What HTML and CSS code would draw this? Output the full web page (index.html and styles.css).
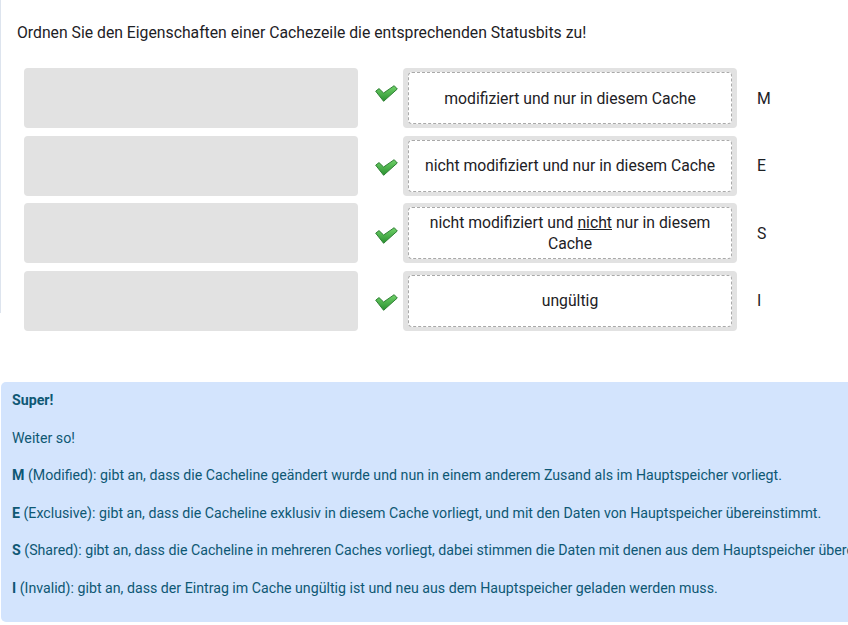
FILE: index.html
```html
<!DOCTYPE html>
<html lang="de">
<head>
<meta charset="utf-8">
<link rel="stylesheet" href="styles.css">
</head>
<body>
<div class="question">
  <p class="qtext">Ordnen Sie den Eigenschaften einer Cachezeile die entsprechenden Statusbits zu!</p>
  <div class="rows">
    <div class="row">
      <div class="drop"></div>
      <div class="mark"><svg width="23" height="17" viewBox="0 0 23 17"><defs><linearGradient id="g1" x1="0" y1="0" x2="0" y2="1"><stop offset="0" stop-color="#72d36a"/><stop offset="1" stop-color="#28902f"/></linearGradient></defs><path d="M0.7 6.2 L4 3.6 L8.6 8 L19.2 0.7 L22.3 4 L8.6 16.3 Z" fill="url(#g1)" stroke="#2f7f34" stroke-width="1" stroke-linejoin="round"/></svg></div>
      <div class="slot"><div class="choice"><span>modifiziert und nur in diesem Cache</span></div></div>
      <div class="label">M</div>
    </div>
    <div class="row">
      <div class="drop"></div>
      <div class="mark"><svg width="23" height="17" viewBox="0 0 23 17"><path d="M0.7 6.2 L4 3.6 L8.6 8 L19.2 0.7 L22.3 4 L8.6 16.3 Z" fill="url(#g1)" stroke="#2f7f34" stroke-width="1" stroke-linejoin="round"/></svg></div>
      <div class="slot"><div class="choice"><span>nicht modifiziert und nur in diesem Cache</span></div></div>
      <div class="label">E</div>
    </div>
    <div class="row">
      <div class="drop"></div>
      <div class="mark"><svg width="23" height="17" viewBox="0 0 23 17"><path d="M0.7 6.2 L4 3.6 L8.6 8 L19.2 0.7 L22.3 4 L8.6 16.3 Z" fill="url(#g1)" stroke="#2f7f34" stroke-width="1" stroke-linejoin="round"/></svg></div>
      <div class="slot"><div class="choice"><span>nicht modifiziert und <u>nicht</u> nur in diesem Cache</span></div></div>
      <div class="label">S</div>
    </div>
    <div class="row">
      <div class="drop"></div>
      <div class="mark"><svg width="23" height="17" viewBox="0 0 23 17"><path d="M0.7 6.2 L4 3.6 L8.6 8 L19.2 0.7 L22.3 4 L8.6 16.3 Z" fill="url(#g1)" stroke="#2f7f34" stroke-width="1" stroke-linejoin="round"/></svg></div>
      <div class="slot"><div class="choice"><span>ungültig</span></div></div>
      <div class="label">I</div>
    </div>
  </div>
</div>
<div class="feedback">
  <p><strong>Super!</strong></p>
  <p>Weiter so!</p>
  <p><strong>M</strong> (Modified): gibt an, dass die Cacheline geändert wurde und nun in einem anderem Zusand als im Hauptspeicher vorliegt.</p>
  <p><strong>E</strong> (Exclusive): gibt an, dass die Cacheline exklusiv in diesem Cache vorliegt, und mit den Daten von Hauptspeicher übereinstimmt.</p>
  <p><strong>S</strong> (Shared): gibt an, dass die Cacheline in mehreren Caches vorliegt, dabei stimmen die Daten mit denen aus dem Hauptspeicher übereinstimmen.</p>
  <p><strong>I</strong> (Invalid): gibt an, dass der Eintrag im Cache ungültig ist und neu aus dem Hauptspeicher geladen werden muss.</p>
</div>
</body>
</html>
```

FILE: styles.css
```css
html, body {
  margin: 0;
  padding: 0;
  overflow: hidden;
  background: #fff;
}
body {
  font-family: Roboto, "Liberation Sans", sans-serif;
  color: #1d2125;
  width: 848px;
  height: 625px;
}
.question {
  border-left: 1px solid #dde4ee;
  height: 313px;
  padding-left: 16px;
  padding-top: 22px;
  box-sizing: border-box;
}
.qtext {
  margin: 0 0 24px 0;
  font-size: 15.75px;
  line-height: 22px;
}
.rows {
  display: flex;
  flex-direction: column;
  gap: 7.67px;
  padding-left: 7px;
}
.row {
  display: flex;
  align-items: center;
  height: 60px;
}
.drop {
  width: 334px;
  height: 60px;
  background: #e2e2e2;
  border-radius: 4px;
}
.mark {
  width: 45px;
  height: 60px;
  display: flex;
  align-items: center;
  justify-content: center;
  padding-left: 11px;
  padding-top: 4px;
  box-sizing: border-box;
}
.row:first-child .mark {
  padding-top: 0;
  padding-bottom: 9px;
}
.slot {
  width: 334px;
  height: 60px;
  background: #e2e2e2;
  border-radius: 4px;
  padding: 4px 5px;
  box-sizing: border-box;
}
.choice {
  height: 100%;
  box-sizing: border-box;
  background: #fff;
  border: 1px dashed #a9a9a9;
  border-radius: 4px;
  display: flex;
  align-items: center;
  justify-content: center;
  text-align: center;
  font-size: 15.75px;
  line-height: 21px;
  padding: 0 10px;
}
.label {
  padding-left: 20px;
  font-size: 15.75px;
}
.feedback {
  margin-top: 69px;
  margin-left: 1px;
  width: 900px;
  height: 240px;
  box-sizing: border-box;
  background: #d3e4fd;
  border-radius: 5px;
  color: #0e5874;
  padding: 8px 11px;
  font-size: 14.2px;
  line-height: 20px;
}
.feedback p {
  margin: 0 0 17.6px 0;
  white-space: nowrap;
}
.feedback strong {
  font-weight: 700;
}
```
